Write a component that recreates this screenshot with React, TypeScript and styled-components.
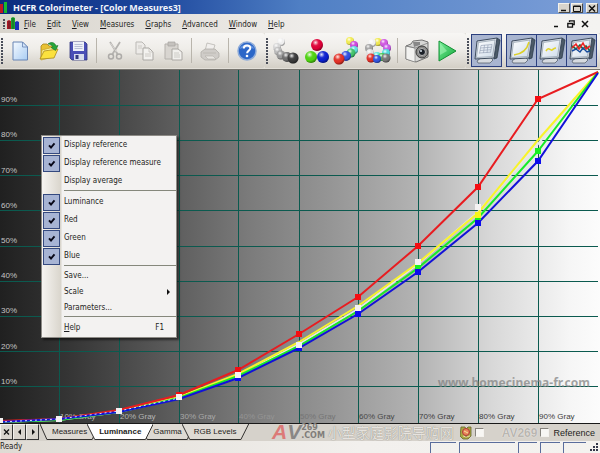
import React, { useState } from "react";
import styled, { createGlobalStyle, css } from "styled-components";

const GlobalStyle = createGlobalStyle`
  *, *::before, *::after { box-sizing: border-box; }
  body { margin: 0; background: #ece9d8; }
  button, input { font: inherit; color: inherit; }
`;

const uiFont = `"DejaVu Sans Condensed", "DejaVu Sans", sans-serif`;
const tabFont = `"Liberation Sans", Arial, sans-serif`;

const Window = styled.div`
  display: flex;
  flex-direction: column;
  min-height: 100vh;
  overflow: hidden;
  background: #eeece8;
  color: #1e1e22;
  font: 8px/12px ${uiFont};
`;

const TitleBar = styled.header`
  display: flex;
  align-items: center;
  height: 14px;
  padding-right: 2px;
  background: linear-gradient(90deg, #0b2c7e 0%, #1c469c 25%, #4f7fc4 50%, #7d9fd8 100%);
`;

const Title = styled.h1`
  flex: 1;
  margin: 0 0 0 5px;
  color: #f2f4fa;
  font: bold 9px/13px "Noto Sans", sans-serif;
  white-space: nowrap;
`;

const CaptionButton = styled.button<{ $gap?: boolean }>`
  display: grid;
  place-items: center;
  width: 12px;
  height: 10px;
  margin: 2px 0 0 ${(p) => (p.$gap ? 3 : 1)}px;
  padding: 0;
  border: 1px solid;
  border-color: #f4f2ec #4c4a48 #4c4a48 #f4f2ec;
  background: #d8d4cc;
`;

const MenuBar = styled.nav`
  display: flex;
  align-items: center;
  height: 19px;
  padding: 0 8px 0 2px;
  background: linear-gradient(90deg, #d9d5cd, #f2f0ee 60%, #f4f3f1);
`;

const MenuButton = styled.button`
  height: 16px;
  margin: 2px 0 0;
  padding: 0 6px 0 5px;
  border: 0;
  background: none;
  white-space: nowrap;
`;

const Spacer = styled.span`
  flex: 1;
`;

const ChildButton = styled.button`
  display: grid;
  place-items: center;
  width: 14px;
  height: 14px;
  padding: 0;
  border: 0;
  background: none;
`;

const ToolBars = styled.div`
  display: flex;
  height: 37px;
  padding-bottom: 1px;
  border-bottom: 1px solid #77756f;
  background: #e2dfd8;
`;

const ToolButton = styled.button<{ $on?: boolean }>`
  display: grid;
  place-items: center;
  flex: none;
  width: 30px;
  height: 33px;
  padding: 0;
  border: 0;
  background: none;
  ${(p) =>
    p.$on &&
    css`
      width: 31px;
      border: 1px solid #2b3f7e;
      background: #a9b5d0;
      & + & { margin-left: -1px; }
    `}
`;

const ToolBar = styled.div<{ $fill?: boolean }>`
  display: flex;
  align-items: center;
  flex: none;
  padding: 0 3px 0 0;
  border-radius: 0 3px 3px 0;
  background: linear-gradient(#f7f6f4, #efede9 45%, #d3cfc6);
  ${(p) =>
    p.$fill &&
    css`
      flex: 1 0 auto;
      ${ToolButton} { flex: 1 0 30px; }
    `}
`;

const Grip = styled.span<{ $short?: boolean }>`
  flex: none;
  width: 2px;
  height: ${(p) => (p.$short ? 10 : 26)}px;
  margin: 0 2px 0 1px;
  background: repeating-linear-gradient(#4b4f5a 0 2px, transparent 2px 3px);
`;

const ToolDivider = styled.span`
  flex: none;
  width: 1px;
  height: 25px;
  margin: 0 3px;
  background: #b9b5ac;
`;

const ToolGap = styled.span`
  flex: none;
  width: 4px;
`;

const ChartArea = styled.main`
  position: relative;
  display: flex;
  flex: 1;
  min-height: 353px;
  background: linear-gradient(90deg, #202020 0%, #363636 12%, #585858 27%, #7c7c7c 42%, #979797 56%, #b4b4b4 70%, #d8d8d8 82%, #f6f6f6 95%, #fcfcfc 100%);
`;

const ChartSvg = styled.svg`
  flex: 1;
  width: 100%;
  min-width: 0;
  overflow: hidden;
  font: 8px ${tabFont};
`;

const SiteMark = styled.span`
  position: absolute;
  right: 10px;
  bottom: 33px;
  color: #808080b8;
  font: bold 12px/14px "Noto Sans", sans-serif;
`;

const PopupMenu = styled.ul`
  position: absolute;
  top: 65px;
  left: 41px;
  width: 136px;
  margin: 0;
  padding: 0;
  list-style: none;
  border: 1px solid #8d8b86;
  background: linear-gradient(90deg, #f6f4f1, #d9d5cc 19px, #f3f2f1 20px);
  box-shadow: 2px 2px 2px #0008;
`;

const MenuLine = styled.li`
  height: 3px;
  margin-left: 22px;
  border-top: 1px solid #85887c;
`;

const CheckLabel = styled.label`
  display: flex;
  align-items: center;
  height: 18px;
  gap: 4px;
  white-space: nowrap;
`;

const CheckInput = styled.input`
  flex: none;
  appearance: none;
  width: 17px;
  height: 17px;
  margin: 0 0 0 1px;
  &:checked {
    border: 1px solid #34497f;
    background: #a7b4d4 url("data:image/svg+xml,%3Csvg xmlns='http://www.w3.org/2000/svg' viewBox='0 0 15 15'%3E%3Cpath d='M5 7.3l2 2.2 3.5-4.2' fill='none' stroke='%23080818' stroke-width='1.9'/%3E%3C/svg%3E");
  }
`;

const MenuCommand = styled.button<{ $tall?: boolean }>`
  display: flex;
  align-items: center;
  justify-content: space-between;
  width: 100%;
  height: ${(p) => (p.$tall ? 18 : 16)}px;
  padding: 0 12px 0 22px;
  border: 0;
  background: none;
`;

const SubArrow = styled.svg`
  width: 4px;
  height: 8px;
  margin-right: -7px;
`;

const TabStrip = styled.div`
  position: relative;
  display: flex;
  height: 18px;
  border-top: 1px solid #191919;
  background: #d6d2cb;
`;

const TabScroll = styled.button`
  display: grid;
  place-items: center;
  width: 13px;
  height: 16px;
  padding: 0;
  border: 1px solid;
  border-color: #f3f1ed #353535 #353535 #f3f1ed;
  background: #d9d5ce;
`;

const TabList = styled.div`
  display: flex;
  margin-left: 1px;
`;

const TabButton = styled.button<{ $active: boolean }>`
  position: relative;
  z-index: ${(p) => (p.$active ? 2 : 1)};
  height: 16px;
  margin-right: -12px;
  padding: 0 12px;
  border: 0;
  background: none;
  font: ${(p) => (p.$active ? "bold" : "normal")} 8px/14px ${tabFont};
  white-space: nowrap;
`;

const TabShape = styled.svg`
  position: absolute;
  z-index: -1;
  inset: 0;
  width: 100%;
  height: 100%;
`;

const ReferenceTools = styled.div`
  display: flex;
  align-items: center;
  gap: 3px;
  margin-left: auto;
  padding-right: 5px;
  font: 9px/12px ${tabFont};
`;

const FaintText = styled.span`
  width: 50px;
  color: #b9b6b0;
  font: bold 12px/12px ${tabFont};
  text-align: right;
  text-shadow: 0 0 1px #fff;
`;

const SmallCheck = styled.input`
  appearance: none;
  width: 9px;
  height: 9px;
  margin: 0;
  border: 1px solid;
  border-color: #86837d #f5f3ef #f5f3ef #86837d;
  background: #f8f7f4;
`;

const RefLabel = styled.label`
  display: flex;
  align-items: center;
  gap: 4px;
`;

const SiteLogo = styled.div`
  position: absolute;
  z-index: 3;
  left: 272px;
  bottom: 1px;
  display: flex;
  align-items: center;
  height: 16px;
  white-space: nowrap;
  pointer-events: none;
`;

const LogoLetters = styled.span`
  color: #8a8785;
  font: italic bold 21px/16px ${tabFont};
  & b { color: #dc7a78; }
`;

const LogoDomain = styled.span`
  display: grid;
  color: #807d7a;
  font: bold 8px/8px "DejaVu Sans", sans-serif;
`;

const LogoName = styled.span`
  margin-left: 3px;
  color: #e6e3de;
  font: 14px/14px "Noto Sans CJK SC", sans-serif;
  text-shadow: 0 0 1px #77746f;
`;

const StatusBar = styled.footer`
  display: flex;
  gap: 3px;
  height: 12px;
  padding-right: 1px;
  background: linear-gradient(90deg, #dfdbd4, #f2f0ed 60%, #f4f2ef);
`;

const StatusText = styled.span`
  flex: 1;
`;

const StatusPane = styled.span<{ $w: number }>`
  width: ${(p) => p.$w}px;
  margin-top: 1px;
  border: solid #5a6d9c;
  border-width: 1px 0 0 1px;
`;

const Ball = ({ x, y, r, fill }: { x: number; y: number; r: number; fill: string }) => (
  <g>
    <circle cx={x} cy={y} r={r} fill={fill} />
    <circle cx={x} cy={y} r={r} fill="url(#ballShade)" />
  </g>
);

const SharedDefs = () => (
  <defs>
    <radialGradient id="ballShade" cx="0.38" cy="0.3" r="0.7">
      <stop offset="0" stopColor="#fff" stopOpacity="0.9" />
      <stop offset="0.35" stopColor="#fff" stopOpacity="0.1" />
      <stop offset="0.7" stopColor="#000" stopOpacity="0" />
      <stop offset="1" stopColor="#000" stopOpacity="0.4" />
    </radialGradient>
    <linearGradient id="paper" x1="0" y1="0" x2="1" y2="1">
      <stop offset="0" stopColor="#f5faff" />
      <stop offset="1" stopColor="#a9cdf3" />
    </linearGradient>
    <linearGradient id="play" x1="0" y1="0" x2="1" y2="1">
      <stop offset="0" stopColor="#7af09a" />
      <stop offset="1" stopColor="#12a63a" />
    </linearGradient>
    <linearGradient id="screen" x1="0" y1="0" x2="1" y2="1">
      <stop offset="0" stopColor="#fff" />
      <stop offset="1" stopColor="#cfdcea" />
    </linearGradient>
  </defs>
);

const Icon = ({ w = 20, h = 20, children }: { w?: number; h?: number; children: React.ReactNode }) => (
  <svg width={w} height={h} viewBox={`0 0 ${w} ${h}`} aria-hidden="true">{children}</svg>
);

const AppMark = () => (
  <Icon w={12} h={13}>
    <path d="M0 4l2-1 2 1v8H0z" fill="#b01824" />
    <path d="M4 1l2-1 2 1v11H4z" fill="#19a72c" />
    <path d="M8 5l2-1 2 1v8H8z" fill="#1a2fb8" />
    <path d="M2 4v8M6 1v11" stroke="#22252c" strokeWidth=".6" />
  </Icon>
);

const NewIcon = () => (
  <Icon>
    <path d="M3 1h9.500l5 5v13H3z" fill="url(#paper)" stroke="#6784b4" />
    <path d="M12.500 1v5h5z" fill="#d3e5fa" stroke="#6784b4" strokeWidth=".8" />
  </Icon>
);

const OpenIcon = () => (
  <Icon>
    <path d="M2 18V5l2-2h4l2 2h7v5z" fill="#e9c234" stroke="#a4831b" strokeWidth=".8" />
    <path d="M3 9l12-3 2 2-3 8-12 3z" fill="#fff6a0" stroke="#c49f28" strokeWidth=".7" />
    <path d="M1 18l4-8 14-2-4 9z" fill="#fbe13e" stroke="#a98a1c" strokeWidth=".8" />
    <path d="M9 3c4-3 7-1 8 2l2-.5-2.500 5-4.500-3 2-.5c-1-2-3-3-5-3z" fill="#27a63a" stroke="#167426" strokeWidth=".6" />
  </Icon>
);

const SaveIcon = () => (
  <Icon>
    <path d="M2 1h15l2 2v16H4l-2-2z" fill="#4a4fb6" stroke="#30367f" strokeWidth=".8" />
    <path d="M5 1h11v9H5z" fill="#eef1f8" />
    <path d="M6.500 3.500h8M6.500 5.500h8M6.500 7.500h8" stroke="#a9b3cb" strokeWidth=".8" />
    <path d="M6 13h10v6H6z" fill="#d7dcec" />
    <path d="M7.500 14h3v4h-3z" fill="#343a82" />
  </Icon>
);

const CutIcon = () => (
  <Icon>
    <path d="M5 1l7.500 12M15 1L7.500 13" stroke="#b4b2af" strokeWidth="1.800" />
    <path d="M5.500 2l6 9" stroke="#eceae6" strokeWidth=".6" />
    <circle cx="6" cy="15.500" r="2.500" fill="none" stroke="#adaba8" strokeWidth="1.500" />
    <circle cx="14" cy="15.500" r="2.500" fill="none" stroke="#adaba8" strokeWidth="1.500" />
  </Icon>
);

const CopyIcon = () => (
  <Icon>
    <path d="M2 1h6l3 3v9H2z" fill="#edebe8" stroke="#bbb9b5" />
    <path d="M9 7h6l4 4v8H9z" fill="#f3f2ef" stroke="#a9a7a3" />
    <path d="M15 7v4h4M4 5h4M4 7h4M11 13h6M11 15h6" fill="none" stroke="#c4c1bd" strokeWidth=".8" />
  </Icon>
);

const PasteIcon = () => (
  <Icon>
    <path d="M2 3h13v15H2z" fill="#d8d5d0" stroke="#b4b1ac" />
    <path d="M5 1h7v4H5z" fill="#c5c2be" stroke="#a7a5a1" strokeWidth=".7" />
    <path d="M9 8h6l4 3v8H9z" fill="#f1f0ed" stroke="#aaa7a3" />
    <path d="M11 12h5M11 14h6M11 16h6" stroke="#c4c1bd" strokeWidth=".8" />
  </Icon>
);

const PrintIcon = () => (
  <Icon>
    <path d="M7 2l8 2-2 6H5z" fill="#f1efed" stroke="#bab7b2" strokeWidth=".8" />
    <path d="M1 11l4-3h10l4 4v4l-4 3H5l-4-3z" fill="#cfccc8" stroke="#b1aea9" strokeWidth=".8" />
    <path d="M3 12h13M5 15h8l3 3H8z" fill="#e8e6e2" stroke="#b2afaa" strokeWidth=".6" />
  </Icon>
);

const HelpIcon = () => (
  <Icon>
    <circle cx="10" cy="10" r="9" fill="#2c67c8" stroke="#8dabd9" strokeWidth="1.500" />
    <path d="M3 8c1-6 13-6 14 0-4-2-10-2-14 0z" fill="#7fa9e8" opacity=".7" />
    <path d="M6.800 7.500c0-4 6.500-4 6.500-.3 0 2.300-3.200 2.600-3.200 5" fill="none" stroke="#fff" strokeWidth="2" />
    <circle cx="10" cy="15" r="1.300" fill="#fff" />
  </Icon>
);

const balls = (items: [number, number, number, string][]) => (
  <Icon w={28} h={28}>
    {items.map(([x, y, r, c], i) => <Ball key={i} x={x} y={y} r={r} fill={c} />)}
  </Icon>
);

const GrayBalls = () =>
  balls([[9, 5, 4, "#f4f4f4"], [5, 10, 4, "#d9d9d9"], [6, 14, 4, "#bdbdbd"], [9, 18, 4.500, "#9b9b9b"], [15, 20, 5, "#6f6f6f"], [21, 21, 5.500, "#3a3a3a"]]);
const PrimaryBalls = () => balls([[14, 8, 6, "#e00038"], [8, 20, 6, "#4fd410"], [20, 20, 6, "#0a1fd0"]]);
const SaturationBalls = () =>
  balls([[17, 4, 4, "#f4ee55"], [21, 8, 4, "#cf45dd"], [21, 13, 4, "#62e0e2"], [18, 16, 4.500, "#43c56c"], [13, 19, 5, "#304fe2"], [6, 22, 5.500, "#e43126"]]);
const CheckerBalls = () =>
  balls([[14, 5, 4, "#f2ea50"], [8, 6, 4, "#f6f6f6"], [20, 6, 4, "#d45ae4"], [5, 11, 4, "#a5a5a5"], [23, 11, 4, "#c85ee8"], [6, 16, 4, "#e4e4e4"], [22, 16, 4, "#50dfe0"], [13, 19, 4, "#5ae6df"], [18, 20, 4, "#3fc84d"], [7, 21, 4.500, "#e23028"], [13, 22, 4, "#3155df"], [22, 21, 4.500, "#777"]]);

const CameraIcon = () => (
  <Icon w={26} h={26}>
    <path d="M2 8l5-2 2-3 9-1 6 2v15l-12 5-10-3z" fill="#d6d6d4" stroke="#555" strokeWidth=".8" />
    <path d="M2 8l9 2v14l-9-3z" fill="#f2f2f0" stroke="#777" strokeWidth=".6" />
    <path d="M2 8l9 2 13-5" fill="none" stroke="#777" strokeWidth=".7" />
    <path d="M9 4h7v3l-6 2z" fill="#888" />
    <circle cx="18" cy="14" r="6" fill="#898987" stroke="#3b3b3b" />
    <circle cx="18" cy="14" r="3.500" fill="#1b2027" stroke="#bbb" />
    <circle cx="17" cy="13" r="1" fill="#dce6ef" />
  </Icon>
);

const PlayIcon = () => (
  <Icon w={22} h={24}>
    <path d="M3 2l17 10L3 22z" fill="url(#play)" stroke="#139034" />
    <path d="M4 4l7 8-7 4z" fill="#a5f5b8" opacity=".6" />
  </Icon>
);

const Monitor = ({ children }: { children: React.ReactNode }) => (
  <Icon w={28} h={28}>
    <path d="M9 20l7-1 4 4-3 3H5l-1-2z" fill="#d7dbe0" stroke="#58626e" strokeWidth=".8" />
    <path d="M24 1l3 2-3 18-3 1z" fill="#4c5a68" stroke="#253544" strokeWidth=".7" />
    <path d="M4 4l20-3-3 20L2 22z" fill="#d7dde5" stroke="#3e4c5e" />
    <path d="M5.500 5.500l16.500-2.500-2.500 16.500L3.500 20.500z" fill="url(#screen)" stroke="#82909f" strokeWidth=".6" />
    {children}
  </Icon>
);

const TableMonitor = () => (
  <Monitor>
    <path d="M8 8.500l11-1M7.500 11l11-.8M7 13.500l11-.8M6.500 16l11-.8M8 8.500l-1.500 8M11.500 8l-1 8M15 8l-1 8M19 7.500l-1.500 8" stroke="#9aa5b9" strokeWidth=".7" />
  </Monitor>
);
const CurveMonitor = () => <Monitor><path d="M6 18c8-1 13-5 15-13" fill="none" stroke="#ddd029" strokeWidth="1.500" /></Monitor>;
const WaveMonitor = () => <Monitor><path d="M8 14c3-5 4 0 6-1s2-2 4-2" fill="none" stroke="#e3d42a" strokeWidth="1.600" /></Monitor>;
const RgbMonitor = () => (
  <Monitor>
    <path d="M4 9l4 3 4-4 3 4 3-3 4 5" fill="none" stroke="#1d6b3c" strokeWidth="1.600" />
    <path d="M4 11l4-4 3 5 4-6 3 6 4-3" fill="none" stroke="#e22" strokeWidth="1.600" />
    <path d="M4 14l4-2 4 3 3-4 4 4 3-1" fill="none" stroke="#174b9c" strokeWidth="1.400" />
  </Monitor>
);

/* Plot space is 600 x 353 units; each series lists its height at every 10% step. */
const steps = [0, 59, 119, 179, 238, 299, 358, 418, 478, 538, 598];
const series = {
  reference: [352, 350, 342, 328, 306, 274, 239, 194, 142, 74, 2],
  yellow: [352, 349, 341, 327, 304, 272, 236, 193, 143, 70, 2],
  green: [352, 350, 342, 328, 306, 276, 241, 198, 148, 81, 2],
  red: [351, 349, 340, 325, 300, 264, 227, 176, 117, 29, 2],
  blue: [352, 349, 342, 329, 308, 278, 244, 202, 153, 91, 3],
};
const whiteMarks = [351, 349, 341, 327, 305, 275, 238, 192, 137];
const pointsOf = (ys: number[]) => ys.map((y, i) => `${steps[i]},${y}`).join(" ");
const xPct = (x: number) => `${(x / 600) * 100}%`;
const yPct = (y: number) => `${(y / 353) * 100}%`;

const Curve = ({ ys, color }: { ys: number[]; color: string }) => (
  <polyline points={pointsOf(ys)} fill="none" stroke={color} strokeWidth={2} vectorEffect="non-scaling-stroke" />
);

const Marker = ({ x, y, color }: { x: number; y: number; color: string }) => (
  <svg x={xPct(x)} y={yPct(y)} overflow="visible">
    <rect x={-3} y={-3} width={6} height={6} fill={color} />
  </svg>
);

const labelColors = ["#b5b5b5", "#b5b5b5", "#a8a8a8", "#949494", "#757575", "#484848", "#3c3c3c", "#3c3c3c", "#3c3c3c"];
const tens = [1, 2, 3, 4, 5, 6, 7, 8, 9];

const LuminanceChart = () => (
  <ChartSvg role="img" aria-label="Luminance by gray level">
    <svg width="100%" height="100%" viewBox="0 0 600 353" preserveAspectRatio="none">
      <g stroke="#0b5a4f" strokeWidth="1" shapeRendering="crispEdges">
        {tens.map((n) => <line key={`v${n}`} x1={steps[n]} x2={steps[n]} y1="0" y2="353" />)}
        {tens.map((n) => <line key={`h${n}`} x1="0" x2="598" y1={n * 35.2} y2={n * 35.2} />)}
      </g>
    </svg>
    {tens.map((n) => (
      <text key={`y${n}`} x="1" y={yPct(352 - n * 35.2)} dy="-3" fill="#c4c4c4">{n * 10}%</text>
    ))}
    {tens.map((n) => (
      <text key={`x${n}`} x={xPct(steps[n] + 1)} y="100%" dy="-4" fill={labelColors[n - 1]}>{n * 10}% Gray</text>
    ))}
    <svg width="100%" height="100%" viewBox="0 0 600 353" preserveAspectRatio="none">
      <Curve ys={series.reference} color="#e8e8e8" />
      <Curve ys={series.yellow} color="#f8f42a" />
      <Curve ys={series.green} color="#16ec28" />
      <Curve ys={series.red} color="#e81c20" />
      <Curve ys={series.blue} color="#1212d8" />
      <polyline points="0,352 59,349 119,341 179,328" fill="none" stroke="#d8d8ff" strokeDasharray="2 3" />
    </svg>
    {steps.slice(3, 10).map((x, i) => <Marker key={x} x={x} y={series.red[i + 3]} color="#f40d12" />)}
    {steps.slice(4, 10).map((x, i) => <Marker key={x} x={x} y={series.green[i + 4]} color="#16f020" />)}
    <Marker x={478} y={145} color="#f6f61a" />
    {steps.slice(4, 10).map((x, i) => <Marker key={x} x={x} y={series.blue[i + 4]} color="#0c0cec" />)}
    {whiteMarks.map((y, i) => <Marker key={y} x={steps[i]} y={y} color="#f4f2f2" />)}
  </ChartSvg>
);

const Accel = ({ text }: { text: string }) => (
  <span><u>{text[0]}</u>{text.slice(1)}</span>
);

const initialChecks: Record<string, boolean> = {
  "Display reference": true,
  "Display reference measure": true,
  "Display average": false,
  Luminance: true,
  Red: true,
  Green: true,
  Blue: true,
};

const ContextMenu = () => {
  const [checks, setChecks] = useState(initialChecks);
  const row = (name: string) => (
    <li key={name}>
      <CheckLabel>
        <CheckInput type="checkbox" checked={checks[name]} onChange={() => setChecks({ ...checks, [name]: !checks[name] })} />
        {name}
      </CheckLabel>
    </li>
  );
  const names = Object.keys(initialChecks);
  return (
    <PopupMenu>
      {names.slice(0, 3).map(row)}
      <MenuLine />
      {names.slice(3).map(row)}
      <MenuLine />
      <li><MenuCommand>Save...</MenuCommand></li>
      <li>
        <MenuCommand>
          Scale
          <SubArrow viewBox="0 0 4 8" aria-hidden="true"><path d="M0 1l3 3-3 3z" fill="#111" /></SubArrow>
        </MenuCommand>
      </li>
      <li><MenuCommand>Parameters...</MenuCommand></li>
      <MenuLine />
      <li><MenuCommand $tall><Accel text="Help" /><span>F1</span></MenuCommand></li>
    </PopupMenu>
  );
};

const tools: [string, () => React.ReactElement][][] = [
  [["New", NewIcon], ["Open", OpenIcon], ["Save", SaveIcon]],
  [["Cut", CutIcon], ["Copy", CopyIcon], ["Paste", PasteIcon]],
  [["Print", PrintIcon]],
  [["About", HelpIcon]],
];
const measureTools: [string, () => React.ReactElement][][] = [
  [["Measure grays", GrayBalls], ["Measure primaries", PrimaryBalls], ["Measure saturations", SaturationBalls], ["Measure all", CheckerBalls]],
  [["Capture", CameraIcon], ["Start", PlayIcon]],
];

const ToolGroups = ({ groups }: { groups: typeof tools }) => (
  <>
    {groups.map((group, g) => (
      <React.Fragment key={g}>
        {g > 0 && <ToolDivider />}
        {group.map(([name, Glyph]) => <ToolButton key={name} aria-label={name}><Glyph /></ToolButton>)}
      </React.Fragment>
    ))}
  </>
);

const menus = ["File", "Edit", "View", "Measures", "Graphs", "Advanced", "Window", "Help"];
const tabs = ["Measures", "Luminance", "Gamma", "RGB Levels"];

export default function App() {
  const [tab, setTab] = useState("Luminance");
  return (
    <Window>
      <GlobalStyle />
      <TitleBar>
        <Icon w={8} h={13}>
          <path d="M0 3h3v9H0z" fill="#c01822" />
          <path d="M4 1h3v11H4z" fill="#18b82c" />
        </Icon>
        <Title>HCFR Colorimeter - [Color Measures3]</Title>
        <CaptionButton aria-label="Minimize"><Icon w={8} h={7}><path d="M1 5.500h5" stroke="#111" strokeWidth="1.500" /></Icon></CaptionButton>
        <CaptionButton aria-label="Maximize"><Icon w={8} h={7}><path d="M.5 1h7v5.500h-7zM.5 1.500h7" fill="none" stroke="#111" /></Icon></CaptionButton>
        <CaptionButton $gap aria-label="Close"><Icon w={8} h={7}><path d="M1 .5l6 6M7 .5l-6 6" stroke="#111" strokeWidth="1.500" /></Icon></CaptionButton>
      </TitleBar>
      <MenuBar>
        <Grip $short />
        <AppMark />
        {menus.map((m) => <MenuButton key={m}><Accel text={m} /></MenuButton>)}
        <Spacer />
        <ChildButton aria-label="Minimize document"><Icon w={8} h={8}><path d="M1 6.500h4" stroke="#111" strokeWidth="1.500" /></Icon></ChildButton>
        <ChildButton aria-label="Restore document"><Icon w={8} h={8}><path d="M2.500 2V.8h4.700v3.700H6M.8 3.500h4.700v3.700H.8z" fill="none" stroke="#111" strokeWidth="1.300" /></Icon></ChildButton>
        <ChildButton aria-label="Close document"><Icon w={8} h={8}><path d="M1 1l6 6M7 1L1 7" stroke="#111" strokeWidth="1.500" /></Icon></ChildButton>
      </MenuBar>
      <svg width="0" height="0" display="block" aria-hidden="true"><SharedDefs /></svg>
      <ToolBars>
        <ToolBar>
          <Grip />
          <ToolGroups groups={tools} />
        </ToolBar>
        <ToolBar $fill>
          <Grip />
          <ToolGroups groups={measureTools} />
        </ToolBar>
        <ToolBar>
          <Grip />
          <ToolButton $on aria-pressed aria-label="Table view"><TableMonitor /></ToolButton>
          <ToolGap />
          <ToolButton $on aria-pressed aria-label="Luminance view"><CurveMonitor /></ToolButton>
          <ToolButton $on aria-pressed aria-label="Gamma view"><WaveMonitor /></ToolButton>
          <ToolButton $on aria-pressed aria-label="RGB levels view"><RgbMonitor /></ToolButton>
        </ToolBar>
      </ToolBars>
      <ChartArea>
        <LuminanceChart />
        <SiteMark>www.homecinema-fr.com</SiteMark>
        <ContextMenu />
      </ChartArea>
      <TabStrip>
        <TabScroll aria-label="Close tab"><Icon w={7} h={8}><path d="M1 1.500l5 5M6 1.500l-5 5" stroke="#111" strokeWidth="1.300" /></Icon></TabScroll>
        <TabScroll aria-label="Previous tab"><Icon w={6} h={8}><path d="M4 1v6L1 4z" fill="#111" /></Icon></TabScroll>
        <TabScroll aria-label="Next tab"><Icon w={6} h={8}><path d="M2 1v6l3-3z" fill="#111" /></Icon></TabScroll>
        <TabList role="tablist">
          {tabs.map((t) => (
            <TabButton key={t} role="tab" aria-selected={t === tab} $active={t === tab} onClick={() => setTab(t)}>
              <TabShape viewBox="0 0 60 16" preserveAspectRatio="none" aria-hidden="true">
                <path d="M0 0l7 15.500h46L60 0" fill={t === tab ? "#fff" : "#dedad3"} stroke="#33312f" vectorEffect="non-scaling-stroke" />
              </TabShape>
              {t}
            </TabButton>
          ))}
        </TabList>
        <ReferenceTools>
          <Icon w={12} h={14}>
            <path d="M1 1h4l1 2 2-2h3v9l-3 3H3L0 10z" fill="#a7a840" stroke="#67642c" strokeWidth=".8" />
            <circle cx="6" cy="6" r="3.500" fill="#e9875a" stroke="#b0383b" />
            <path d="M3 10l3 1 4-1M4 5l4 2" stroke="#f4dfa0" />
          </Icon>
          <SmallCheck type="checkbox" aria-label="Show data" />
          <FaintText>AV269</FaintText>
          <RefLabel><SmallCheck type="checkbox" />Reference</RefLabel>
        </ReferenceTools>
        <SiteLogo>
          <LogoLetters><b>A</b>V</LogoLetters>
          <LogoDomain><span>269</span><span>.COM</span></LogoDomain>
          <LogoName>小型家庭影院导购网</LogoName>
        </SiteLogo>
      </TabStrip>
      <StatusBar>
        <StatusText>Ready</StatusText>
        <StatusPane $w={26} />
        <StatusPane $w={56} />
        <StatusPane $w={19} />
        <StatusPane $w={20} />
        <StatusPane $w={23} />
        <Icon w={10} h={11}><path d="M7 2h2v2H7zM4 5h2v2H4zM7 5h2v2H7zM1 8h2v2H1zM4 8h2v2H4zM7 8h2v2H7z" fill="#34384a" /></Icon>
      </StatusBar>
    </Window>
  );
}
